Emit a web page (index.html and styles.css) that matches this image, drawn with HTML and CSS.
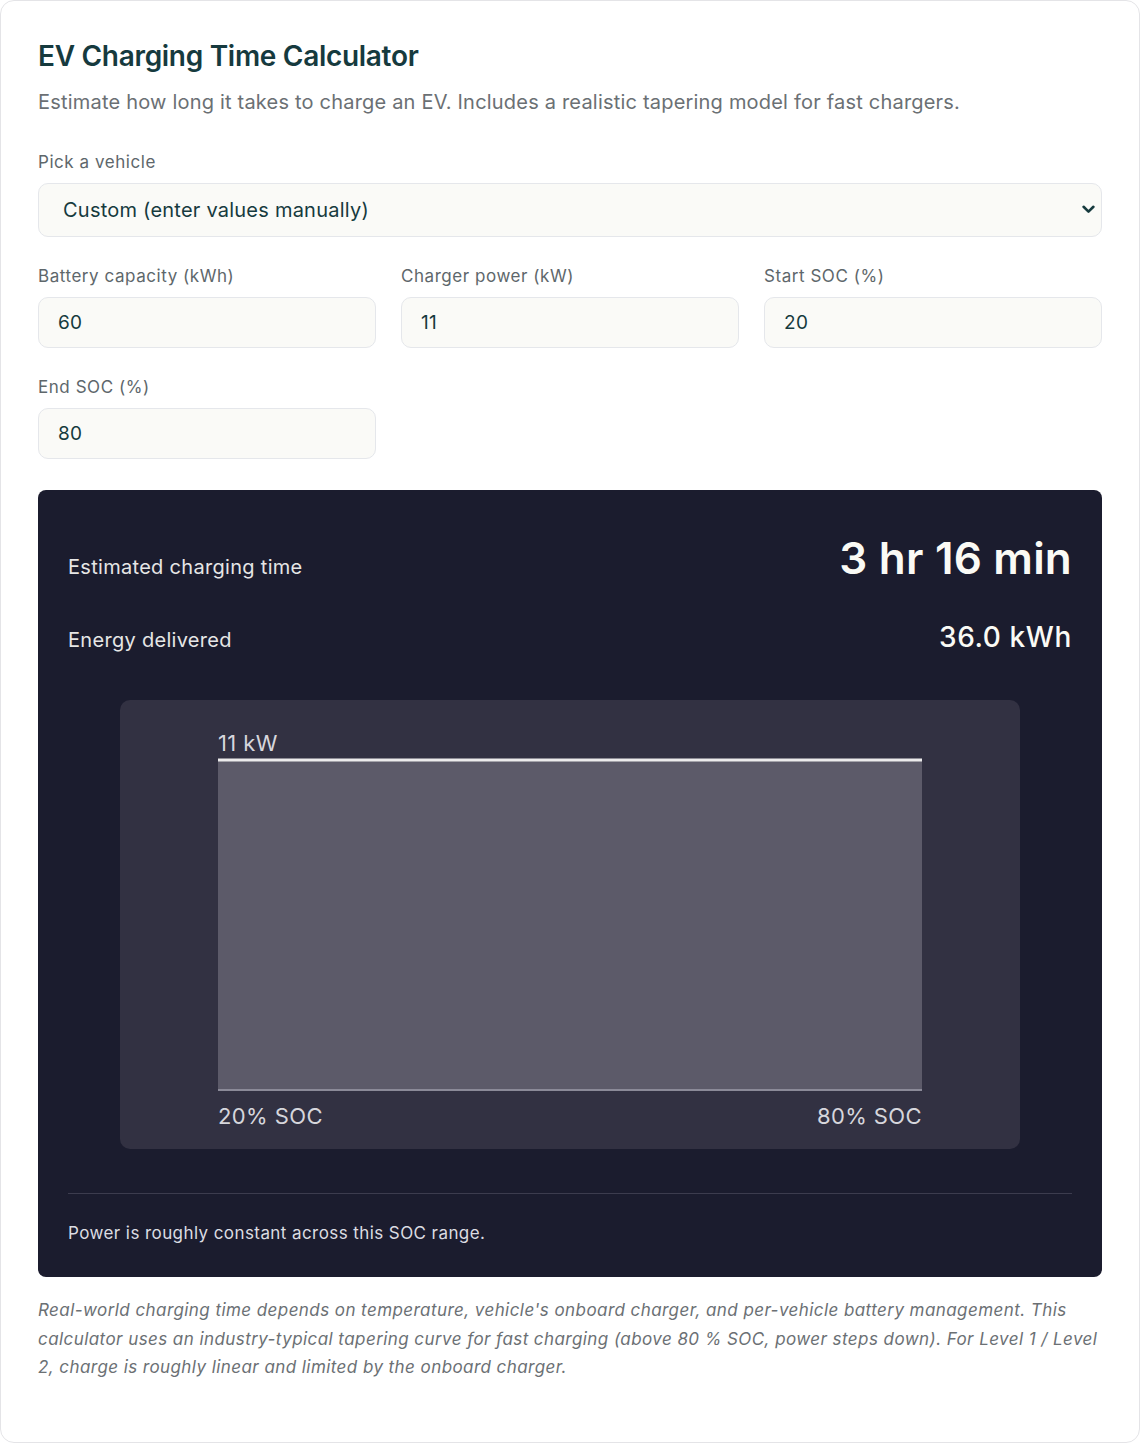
FILE: index.html
```html
<!DOCTYPE html>
<html lang="en">
<head>
<meta charset="utf-8">
<title>EV Charging Time Calculator</title>
<link rel="stylesheet" href="styles.css">
</head>
<body>
<div class="card">
  <h1 class="title">EV Charging Time Calculator</h1>
  <p class="subtitle">Estimate how long it takes to charge an EV. Includes a realistic tapering model for fast chargers.</p>

  <div class="field">
    <label class="label">Pick a vehicle</label>
    <div class="select-wrap">
      <div class="select">Custom (enter values manually)</div>
      <svg class="chevron" width="13" height="9" viewBox="0 0 13 9"><path d="M1.6 1.8 L6.5 6.6 L11.4 1.8" fill="none" stroke="#163a3e" stroke-width="2.6" stroke-linecap="round" stroke-linejoin="round"/></svg>
    </div>
  </div>

  <div class="grid">
    <div class="field">
      <label class="label">Battery capacity (kWh)</label>
      <div class="input">60</div>
    </div>
    <div class="field">
      <label class="label">Charger power (kW)</label>
      <div class="input">11</div>
    </div>
    <div class="field">
      <label class="label">Start SOC (%)</label>
      <div class="input">20</div>
    </div>
    <div class="field">
      <label class="label">End SOC (%)</label>
      <div class="input">80</div>
    </div>
  </div>

  <div class="panel">
    <div class="stats">
      <div class="stat">
        <span class="stat-label">Estimated charging time</span>
        <span class="stat-big">3 hr 16 min</span>
      </div>
      <div class="stat">
        <span class="stat-label">Energy delivered</span>
        <span class="stat-mid">36.0 kWh</span>
      </div>
    </div>
    <div class="chart">
      <svg class="chart-svg" viewBox="0 0 900 449" width="900" height="449">
        <rect x="98" y="60" width="704" height="330" fill="#5c5a69"/>
        <line x1="98" y1="60" x2="802" y2="60" stroke="#ecebec" stroke-width="3"/>
        <line x1="98" y1="390" x2="802" y2="390" stroke="#8b8a98" stroke-width="2"/>
        <text x="98" y="51" class="chart-text">11 kW</text>
        <text x="98" y="424" class="chart-text">20% SOC</text>
        <text x="802" y="424" class="chart-text" text-anchor="end">80% SOC</text>
      </svg>
    </div>
    <div class="divider"></div>
    <p class="note">Power is roughly constant across this SOC range.</p>
  </div>

  <p class="footnote">Real-world charging time depends on temperature, vehicle's onboard charger, and per-vehicle battery management. This calculator uses an industry-typical tapering curve for fast charging (above 80 % SOC, power steps down). For Level 1 / Level 2, charge is roughly linear and limited by the onboard charger.</p>
</div>
</body>
</html>
```

FILE: styles.css
```css
* { box-sizing: border-box; }
html, body { margin: 0; padding: 0; background: #ffffff; }
body { font-family: Inter, "Noto Sans", "Liberation Sans", sans-serif; }

.card {
  width: 1140px;
  border: 1px solid #e4e4e7;
  border-radius: 14px;
  padding: 38px 37px 38px 37px;
  background: #ffffff;
}

.title {
  margin: 0;
  font-size: 28px;
  line-height: 34px;
  font-weight: 600;
  color: #163a3e;
  letter-spacing: -0.3px;
}

.subtitle {
  margin: 15px 0 0 0;
  font-size: 20px;
  line-height: 28px;
  letter-spacing: 0.2px;
  color: #6b7074;
}

.field {
  display: flex;
  flex-direction: column;
  gap: 9px;
}

.subtitle + .field { margin-top: 34px; }

.label {
  font-size: 17px;
  line-height: 24px;
  letter-spacing: 0.55px;
  color: #5e676b;
}

.select-wrap { position: relative; }

.select {
  height: 54px;
  border: 1px solid #e5e7eb;
  border-radius: 10px;
  background: #fafaf7;
  padding: 0 24px;
  display: flex;
  align-items: center;
  font-size: 20px;
  letter-spacing: 0.23px;
  color: #163a3e;
}

.chevron {
  position: absolute;
  right: 7px;
  top: 22px;
}

.grid {
  margin-top: 27px;
  display: grid;
  grid-template-columns: repeat(3, 1fr);
  column-gap: 25px;
  row-gap: 27px;
}

.input {
  height: 51px;
  border: 1px solid #e5e7eb;
  border-radius: 10px;
  background: #fafaf7;
  padding: 0 19px;
  display: flex;
  align-items: center;
  font-size: 19px;
  letter-spacing: 0.3px;
  color: #163a3e;
}

.panel {
  margin-top: 31px;
  background: #1b1c2e;
  border-radius: 8px;
  padding: 30px 30px 30px 30px;
  color: #f4f4ee;
}

.stats {
  display: flex;
  flex-direction: column;
  gap: 35px;
  padding-top: 12px;
}

.stat {
  display: flex;
  justify-content: space-between;
  align-items: baseline;
}

.stat-label {
  font-size: 20px;
  letter-spacing: 0.3px;
  color: #e6e6e6;
}

.stat-big {
  font-size: 44px;
  line-height: 53px;
  font-weight: 600;
  color: #fafaf5;
  letter-spacing: 0.2px;
}

.stat-mid {
  font-size: 28px;
  line-height: 34px;
  font-weight: 500;
  letter-spacing: 0.6px;
  color: #fafaf5;
}

.chart {
  margin: 46px auto 0 auto;
  width: 900px;
  height: 449px;
  background: #323142;
  border-radius: 10px;
  overflow: hidden;
}

.chart-svg { display: block; }

.chart-text {
  font-family: Inter, "Noto Sans", sans-serif;
  font-size: 22px;
  letter-spacing: 0.4px;
  fill: #d6d6dc;
}

.divider {
  margin-top: 44px;
  height: 1px;
  background: #3c3c4e;
}

.note {
  margin: 26px 0 0 0;
  font-size: 17px;
  line-height: 27px;
  letter-spacing: 0.42px;
  color: #dcdce2;
}

.footnote {
  margin: 19px 0 22px 0;
  font-size: 17px;
  line-height: 28.5px;
  letter-spacing: 0.43px;
  font-style: italic;
  color: #6b7074;
}
```
